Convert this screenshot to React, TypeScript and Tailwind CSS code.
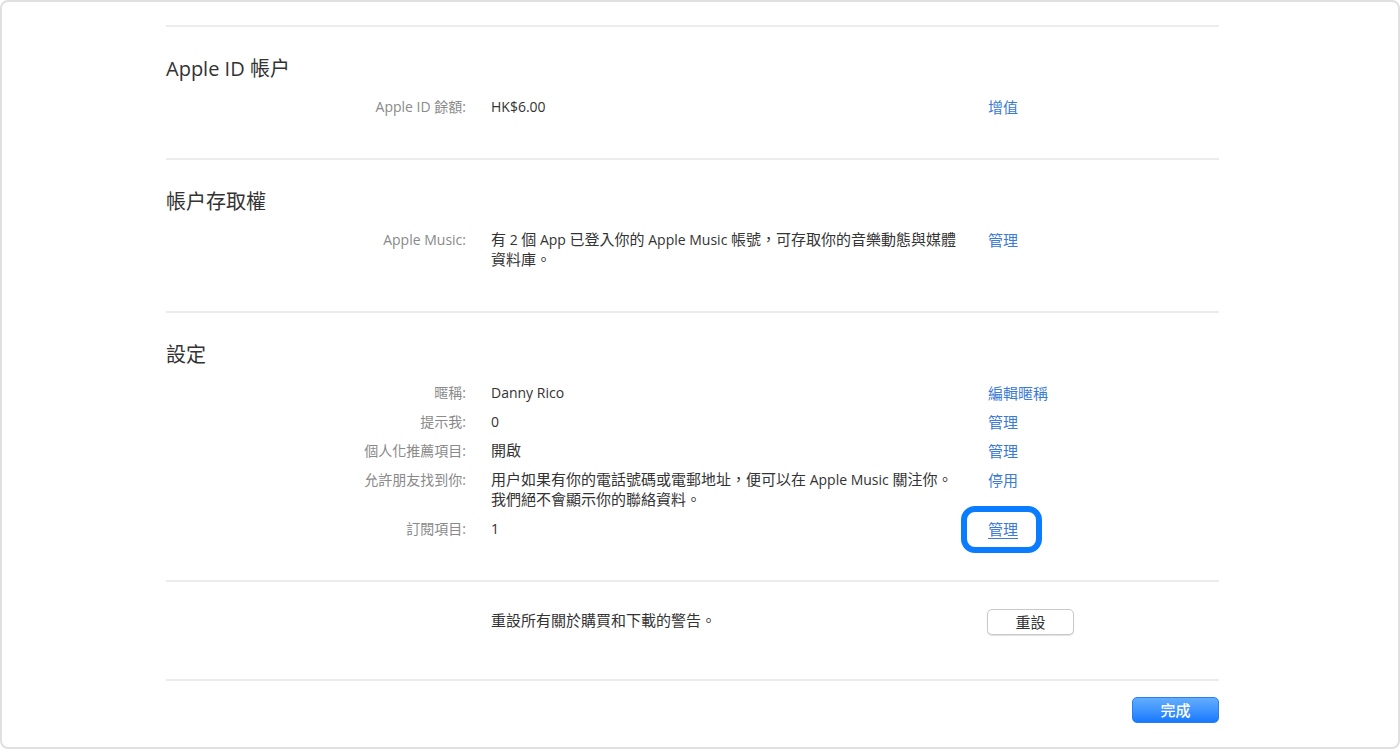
import React from "react";

const font = "font-['Open_Sans','Noto_Sans_CJK_TC',sans-serif]";

// Han characters and full-width punctuation are set a step larger than Latin text
const CJK_RUN = /([\u3000-\u303f\u3400-\u9fff\uff00-\uffef]+)/;

function Mixed({ text }: { text: string }) {
  return (
    <>
      {text.split(CJK_RUN).map((part, i) =>
        i % 2 === 1 ? (
          <span key={i} className="text-[15px] leading-none">
            {part}
          </span>
        ) : (
          <React.Fragment key={i}>{part}</React.Fragment>
        )
      )}
    </>
  );
}

function Divider() {
  return <div className="h-[2px] bg-[#ececec]" />;
}

function Row({
  label,
  lines,
  action,
}: {
  label: string;
  lines: string[];
  action?: React.ReactNode;
}) {
  return (
    <div className="flex items-start text-[14px] leading-[20px]">
      <div className="w-[300px] shrink-0 text-right text-[#8a8a8a]">{label}</div>
      <div className="ml-[25px] w-[472px] shrink-0 whitespace-nowrap text-[#333]">
        {lines.map((l, i) => (
          <div key={i} className="h-[20px]">
            <Mixed text={l} />
          </div>
        ))}
      </div>
      <div className="ml-[25px] h-[20px] text-[15px] text-[#3b7bd4]">{action}</div>
    </div>
  );
}

function Section({ title, children }: { title: string; children: React.ReactNode }) {
  return (
    <div className="pt-[28px] pb-[41px]">
      <h2 className="text-[20px] leading-[28px] text-[#333]">{title}</h2>
      <div className="mt-[14px] flex flex-col gap-[9px]">{children}</div>
    </div>
  );
}

export default function App() {
  return (
    <div className={`${font} h-[749px] w-[1400px] overflow-hidden rounded-[8px] border-2 border-[#e0e0e0] bg-white`}>
      <div className="ml-[164px] w-[1053px] pt-[23px]">
        <Divider />
        <Section title="Apple ID 帳户">
          <Row label="Apple ID 餘額:" lines={["HK$6.00"]} action={<a>增值</a>} />
        </Section>
        <Divider />
        <Section title="帳户存取權">
          <Row
            label="Apple Music:"
            lines={["有 2 個 App 已登入你的 Apple Music 帳號，可存取你的音樂動態與媒體", "資料庫。"]}
            action={<a>管理</a>}
          />
        </Section>
        <Divider />
        <Section title="設定">
          <Row label="暱稱:" lines={["Danny Rico"]} action={<a>編輯暱稱</a>} />
          <Row label="提示我:" lines={["0"]} action={<a>管理</a>} />
          <Row label="個人化推薦項目:" lines={["開啟"]} action={<a>管理</a>} />
          <Row
            label="允許朋友找到你:"
            lines={["用户如果有你的電話號碼或電郵地址，便可以在 Apple Music 關注你。", "我們絕不會顯示你的聯絡資料。"]}
            action={<a>停用</a>}
          />
          <Row
            label="訂閱項目:"
            lines={["1"]}
            action={
              <span className="relative inline-block leading-[20px]">
                <a className="underline underline-offset-[3px]">管理</a>
                <span className="pointer-events-none absolute left-[-27px] top-[-13px] h-[47px] w-[81px] rounded-[14px] border-[6px] border-[#0a7cff]" />
              </span>
            }
          />
        </Section>
        <Divider />
        <div className="flex items-start pt-[27px] pb-[44px] text-[14px] leading-[20px]">
          <div className="w-[300px] shrink-0" />
          <div className="ml-[25px] mt-[1px] h-[20px] w-[471px] shrink-0 text-[15px] text-[#333]">
            重設所有關於購買和下載的警告。
          </div>
          <button className="ml-[25px] h-[26px] w-[87px] rounded-[5px] border border-[#c9c9c9] bg-white text-[15px] leading-[24px] text-[#333] shadow-[0_1px_1px_rgba(0,0,0,0.12)]">
            重設
          </button>
        </div>
        <Divider />
        <div className="flex justify-end pt-[16px]">
          <button className="h-[26px] w-[87px] rounded-[5px] border border-[#2a7ff0] bg-gradient-to-b from-[#62adff] to-[#1479ff] text-[15px] font-medium leading-[24px] text-white">
            完成
          </button>
        </div>
      </div>
    </div>
  );
}
